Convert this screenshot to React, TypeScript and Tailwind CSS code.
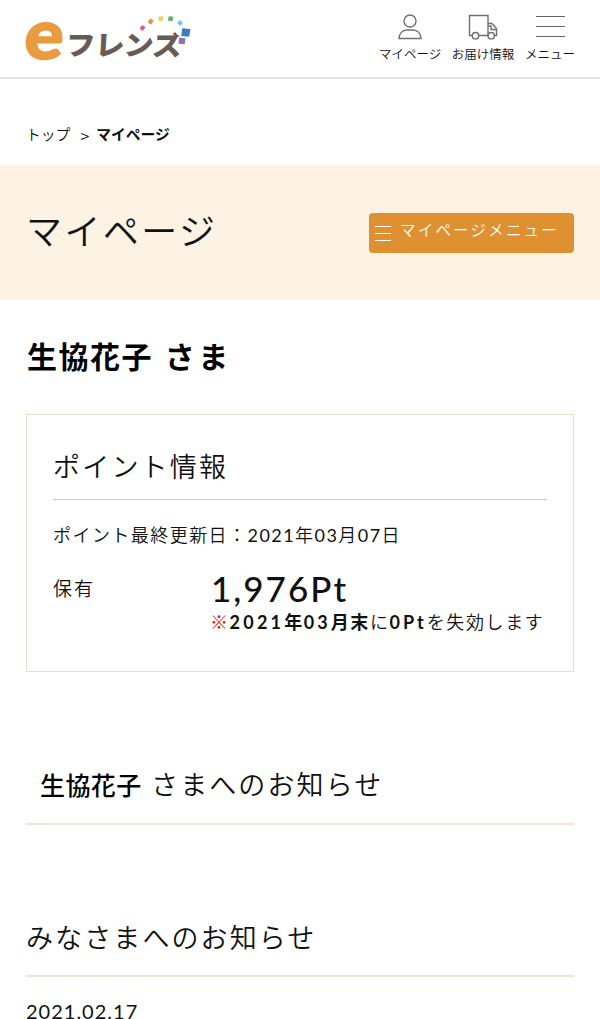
import React from 'react';

interface NavItemProps {
  label: string;
  className?: string;
  children: React.ReactNode;
}

const Logo: React.FC = () => (
  <svg width="170" height="50" viewBox="0 0 170 50" className="overflow-visible" role="img" aria-label="eフレンズ">
    <text
      transform="translate(-2 47) scale(1.06 1) skewX(-4)"
      fontSize="69"
      fontWeight="900"
      fill="#e89c3f"
      stroke="#e89c3f"
      strokeWidth="1.6"
      fontFamily="Lato, sans-serif"
    >
      e
    </text>
    <text
      transform="translate(40.5 42.5) scale(1.08 1) skewX(-3)"
      fontSize="27"
      fontWeight="700"
      fill="#685a55"
      stroke="#685a55"
      strokeWidth="0.9"
      fontFamily="'Noto Sans CJK JP', sans-serif"
    >
      フレンズ
    </text>
    {/* the coloured tiles take the place of the dakuten */}
    <path d="M150.500 11h17v12.500h-9l-2 2.500-6-5z" fill="#fff" />
    <path d="M117.500 13l3 2.200-2.800 3.800-3.200-2.800z" fill="#e0587d" />
    <path d="M125 6.500l3.600 2-2.200 4-3.600-2z" fill="#e3923a" />
    <path d="M133.300 4.800l4.200-.8.800 4.400-4.400.8z" fill="#f4cf58" />
    <path d="M143.700 4.200l4.600.6-.8 4.400-4.600-.6z" fill="#5cb35a" />
    <path d="M154.800 8l3.200 3-2.800 3-3.200-3z" fill="#78c6e6" />
    <path d="M157.200 16.200l8.200.8-1.200 7.800-8-.8z" fill="#3c7fc1" />
    <path d="M154.200 25.700l6.300.6-.8 6-6.200-.6z" fill="#8f70b3" />
  </svg>
);

const NavItem: React.FC<NavItemProps> = ({ label, className = '', children }) => (
  <a href="#" className={`flex flex-col items-center whitespace-nowrap ${className}`}>
    <span className="flex h-[30px] items-center">{children}</span>
    <span className="mt-[3px] text-[12.500px] leading-[20px]">{label}</span>
  </a>
);

const UserIcon: React.FC = () => (
  <svg width="24" height="26" viewBox="0 0 24 26" fill="none" stroke="#707070" strokeWidth="1.4">
    <circle cx="12" cy="7" r="6" />
    <path d="M1 24.500c0-5 3.500-8.500 8-8.500h6c4.500 0 8 3.500 8 8.500z" />
  </svg>
);

const TruckIcon: React.FC = () => (
  <svg width="30" height="26" viewBox="0 0 30 26" fill="none" stroke="#707070" strokeWidth="1.4">
    <path d="M4.300 21.500H1.500V1.500h18.500v20H10.700" />
    <path d="M20 9.500h4l4.500 5v7H26.400" />
    <path d="M20 12h3v3.500h5.500" />
    <circle cx="7.500" cy="21.700" r="3.200" />
    <circle cx="23.200" cy="21.700" r="3.200" />
  </svg>
);

const Header: React.FC = () => (
  <header className="flex h-[79px] items-start justify-between border-b-2 border-[#e5e5e5] px-[25px] pt-[12px]">
    <Logo />
    <nav className="flex">
      <NavItem label="マイページ" className="w-[62px]">
        <UserIcon />
      </NavItem>
      <NavItem label="お届け情報" className="ml-[10px] w-[64px]">
        <TruckIcon />
      </NavItem>
      <NavItem label="メニュー" className="ml-[10px] w-[50px]">
        <span className="mb-[2px] flex h-[21px] w-[29px] flex-col justify-between">
          <span className="h-px bg-[#666]" />
          <span className="h-px bg-[#666]" />
          <span className="h-px bg-[#666]" />
        </span>
      </NavItem>
    </nav>
  </header>
);

const App: React.FC = () => {
  return (
    <div className="w-[600px] bg-white font-['Lato','Noto_Sans_CJK_JP',sans-serif] font-[350] text-[#111]">
      <Header />

      <div className="flex h-[86px] items-center pb-[1px] pl-[26px] pt-[24px] text-[14.800px] leading-[22px]">
        <span>トップ</span>
        <span className="ml-[10px] mr-[7px] mt-[2px] font-['Noto_Sans_CJK_JP',sans-serif] text-[16px]">&gt;</span>
        <span className="font-bold">マイページ</span>
      </div>

      <div className="flex h-[135px] items-center justify-between bg-[#fdf3e4] px-[26px]">
        <h1 className="mb-[3px] text-[36px] leading-[50px] tracking-[2.400px]">マイページ</h1>
        <button className="flex h-[40px] w-[205px] items-center rounded bg-[#df9031] pl-[6px] text-white">
          <span className="mt-[1px] flex h-[15px] w-[16px] flex-col justify-between">
            <span className="h-px bg-white" />
            <span className="h-px bg-white" />
            <span className="h-px bg-white" />
          </span>
          <span className="mb-[3px] ml-[9px] whitespace-nowrap text-[15.500px] tracking-[2.200px]">マイページメニュー</span>
        </button>
      </div>

      <main className="px-[26px]">
        <h2 className="mt-[36px] h-[41px] pl-[1px] text-[30px] font-bold leading-[40px] tracking-[1.500px] text-black">
          生協花子 <span className="ml-[3px] tracking-[3.500px]">さま</span>
        </h2>

        <section className="mt-[37px] h-[258px] border border-[#e9decb] px-[26px]">
          <h3 className="h-[85px] border-b border-[#e0c694] pt-[32px] text-[27px] leading-[40px] tracking-[2.200px]">
            ポイント情報
          </h3>
          <p className="mt-[22px] whitespace-nowrap text-[18px] leading-[26px] tracking-[1.450px]">
            ポイント最終更新日：<span className="font-normal">2021</span>年<span className="font-normal">03</span>月
            <span className="font-normal">07</span>日
          </p>
          <div className="mt-[22px] flex">
            <div className="w-[158px] pt-[6px] text-[19px] leading-[26px] tracking-[2px]">保有</div>
            <div className="whitespace-nowrap">
              <p className="text-[35px] font-medium leading-[36px] tracking-[2px]">1,976Pt</p>
              <p className="mt-[3px] text-[18px] leading-[26px] tracking-[1.600px]">
                <span className="-ml-px text-[#c62424]">※</span>
                <b className="font-bold">
                  <span className="tracking-[3.200px]">2021</span>年<span className="tracking-[3px]">03</span>月末
                </b>
                に<b className="font-bold tracking-[3px]">0Pt</b>を失効します
              </p>
            </div>
          </div>
        </section>

        <section className="mt-[92px] h-[61px] border-b-2 border-[#ede5da] pl-[14px]">
          <h3 className="text-[27px] leading-[41px] tracking-[2.100px]">
            <span className="text-[25px] font-medium tracking-[0.400px] text-black">生協花子</span> さまへのお知らせ
          </h3>
        </section>

        <section className="mt-[92px]">
          <h3 className="h-[60px] border-b-2 border-[#ede5da] text-[27px] leading-[41px] tracking-[2.100px]">
            みなさまへのお知らせ
          </h3>
          <p className="mt-[22px] h-[20px] text-[20px] font-normal leading-[24px] tracking-[1px]">2021.02.17</p>
        </section>
      </main>
    </div>
  );
};

export default App;
